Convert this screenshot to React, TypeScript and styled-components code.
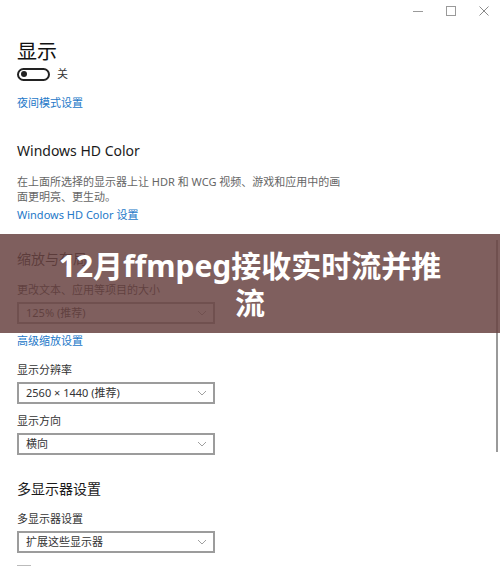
import styled, { createGlobalStyle } from "styled-components";

const GlobalStyle = createGlobalStyle`
  html, body {
    margin: 0;
    padding: 0;
    background: #ffffff;
  }
  body {
    font-family: "Noto Sans", "Noto Sans CJK SC", sans-serif;
  }
`;

interface SelectProps {
  value: string;
}

const Select: React.FunctionComponent<SelectProps> = ({ value }) => (
  <SelectBox>
    <SelectValue>{value}</SelectValue>
    <svg width="10" height="6" viewBox="0 0 10 6">
      <path d="M1 1 L5 5 L9 1" fill="none" stroke="#a0a0a0" strokeWidth="1" />
    </svg>
  </SelectBox>
);

const App = () => {
  return (
    <Page>
      <GlobalStyle />
      <TitleBar>
        <WindowButton>
          <svg width="10" height="10" viewBox="0 0 10 10">
            <path d="M0 5.5 H10" stroke="#9a9a9a" strokeWidth="1" />
          </svg>
        </WindowButton>
        <WindowButton>
          <svg width="10" height="10" viewBox="0 0 10 10">
            <rect x="0.5" y="0.5" width="9" height="9" fill="none" stroke="#9a9a9a" strokeWidth="1" />
          </svg>
        </WindowButton>
        <WindowButton>
          <svg width="10" height="10" viewBox="0 0 10 10">
            <path d="M0.5 0.5 L9.5 9.5 M9.5 0.5 L0.5 9.5" stroke="#8a8a8a" strokeWidth="1" />
          </svg>
        </WindowButton>
      </TitleBar>

      <Content>
        <PageTitle>显示</PageTitle>
        <ToggleRow>
          <Toggle>
            <ToggleDot />
          </Toggle>
          <ToggleLabel>关</ToggleLabel>
        </ToggleRow>
        <Link $top={13}>夜间模式设置</Link>

        <SectionTitle $top={31}>Windows HD Color</SectionTitle>
        <Description>
          在上面所选择的显示器上让 HDR 和 WCG 视频、游戏和应用中的画
          <br />
          面更明亮、更生动。
        </Description>
        <Link $top={3}>Windows HD Color 设置</Link>

        <SectionTitle $top={27}>缩放与布局</SectionTitle>
        <FieldLabel $top={14}>更改文本、应用等项目的大小</FieldLabel>
        <Select value="125% (推荐)" />
        <Link $top={9}>高级缩放设置</Link>

        <FieldLabel $top={13}>显示分辨率</FieldLabel>
        <Select value="2560 × 1440 (推荐)" />
        <FieldLabel $top={9}>显示方向</FieldLabel>
        <Select value="横向" />

        <SectionTitle $top={25}>多显示器设置</SectionTitle>
        <FieldLabel $top={13}>多显示器设置</FieldLabel>
        <Select value="扩展这些显示器" />
        <Stub />
      </Content>

      <ScrollTrack />

      <Banner>
        <BannerTitle>12月ffmpeg接收实时流并推流</BannerTitle>
      </Banner>
    </Page>
  );
};

export default App;

const Page = styled.div`
  position: relative;
  width: 500px;
  height: 568px;
  overflow: hidden;
  background: #ffffff;
`;

const TitleBar = styled.div`
  display: flex;
  justify-content: flex-end;
  height: 24px;
`;

const WindowButton = styled.div`
  display: flex;
  align-items: center;
  justify-content: center;
  width: 33px;
  height: 22px;
`;

const Content = styled.div`
  display: flex;
  flex-direction: column;
  align-items: flex-start;
  padding: 15px 0 0 17px;
`;

const PageTitle = styled.div`
  font-size: 20px;
  line-height: 26px;
  color: #111;
`;

const ToggleRow = styled.div`
  display: flex;
  align-items: center;
  gap: 7px;
  margin-top: 1px;
`;

const Toggle = styled.div`
  display: flex;
  align-items: center;
  box-sizing: border-box;
  width: 33px;
  height: 13px;
  border: 2px solid #222;
  border-radius: 7px;
  padding-left: 2px;
`;

const ToggleDot = styled.div`
  width: 6px;
  height: 6px;
  border-radius: 50%;
  background: #222;
`;

const ToggleLabel = styled.span`
  font-size: 11px;
  line-height: 16px;
  color: #333;
`;

const Link = styled.div<{ $top: number }>`
  margin-top: ${(p) => p.$top}px;
  font-size: 11px;
  line-height: 16px;
  color: #2478c8;
`;

const SectionTitle = styled.div<{ $top: number }>`
  margin-top: ${(p) => p.$top}px;
  font-size: 14px;
  line-height: 18px;
  color: #1a1a1a;
`;

const Description = styled.div`
  margin-top: 14px;
  font-size: 11px;
  line-height: 15px;
  color: #666;
`;

const FieldLabel = styled.div<{ $top: number }>`
  margin-top: ${(p) => p.$top}px;
  font-size: 11px;
  line-height: 16px;
  color: #333;
`;

const SelectBox = styled.div`
  box-sizing: border-box;
  display: flex;
  align-items: center;
  justify-content: space-between;
  width: 198px;
  height: 22px;
  margin-top: 4px;
  padding: 0 6px 0 7px;
  border: 2px solid #9c9c9c;
  background: #fff;
`;

const SelectValue = styled.span`
  font-size: 11px;
  line-height: 14px;
  color: #333;
`;

const Stub = styled.div`
  width: 14px;
  height: 1px;
  margin-top: 12px;
  background: #bbb;
`;

const ScrollTrack = styled.div`
  position: absolute;
  left: 496px;
  top: 240px;
  width: 2px;
  height: 212px;
  background: #9a9a9a;
`;

const Banner = styled.div`
  position: absolute;
  left: 0;
  right: 0;
  top: 234px;
  height: 99px;
  display: flex;
  align-items: center;
  justify-content: center;
  background: rgba(104, 67, 66, 0.85);
`;

const BannerTitle = styled.div`
  width: 400px;
  text-align: center;
  font-family: "Noto Sans", "Noto Sans CJK SC", sans-serif;
  font-weight: 700;
  font-size: 30px;
  line-height: 37px;
  color: #ffffff;
`;
